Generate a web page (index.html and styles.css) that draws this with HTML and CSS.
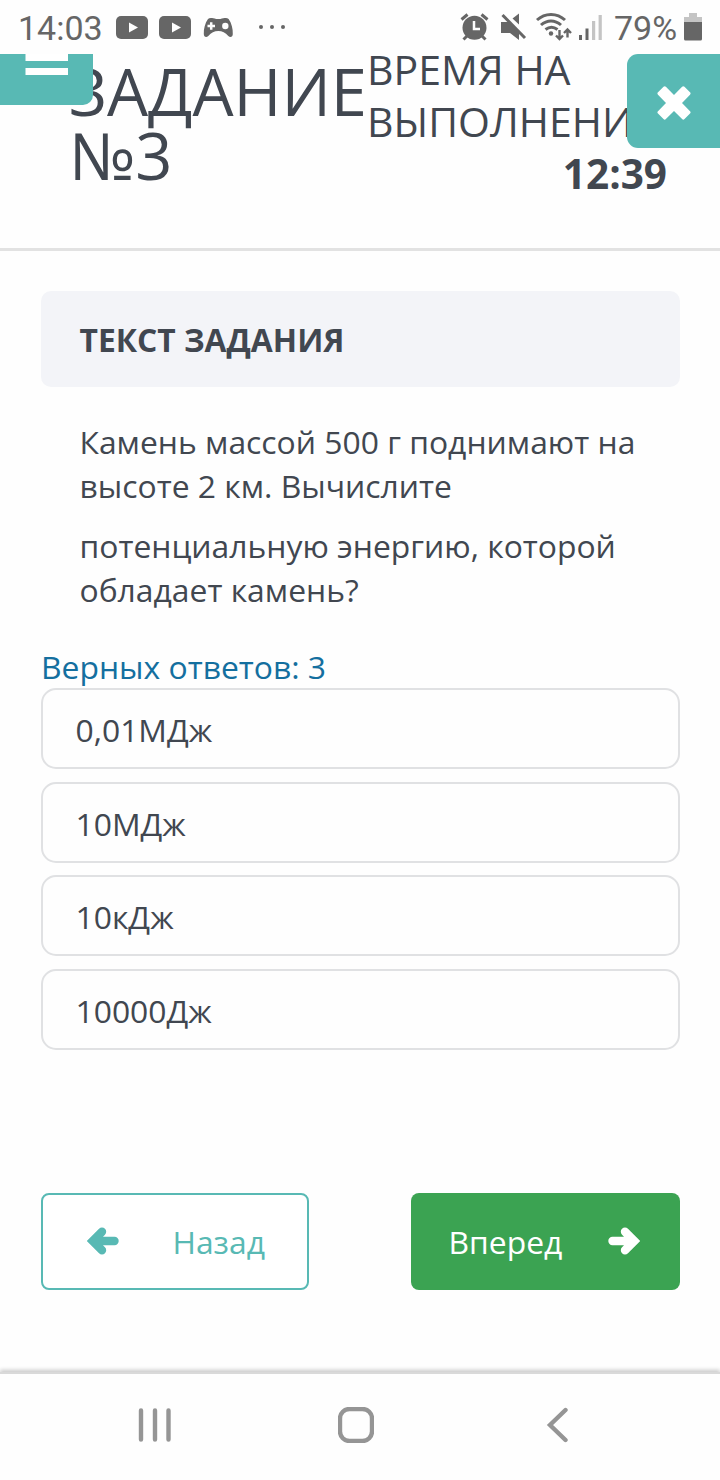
FILE: index.html
```html
<!DOCTYPE html>
<html lang="ru">
<head>
  <meta charset="UTF-8">
  <meta name="viewport" content="width=720, initial-scale=1.0">
  <title>Задание №3</title>
  <link rel="stylesheet" href="styles.css">
</head>
<body>
  <div class="status-bar">
    <span class="clock">14:03</span>
    <svg class="status-left" viewBox="110 0 180 54" width="180" height="54">
      <rect x="116" y="16" width="32" height="23" rx="5"/>
      <path class="cut" d="M129 22.500v10l9-5z"/>
      <rect x="159" y="16" width="32" height="23" rx="5"/>
      <path class="cut" d="M172 22.500v10l9-5z"/>
      <path d="M208 19q1.500-1.500 4-1c2 .3 3 1 6.300 1s4.300-.7 6.300-1q2.500-.5 4 1c3 4 4.400 10 4.200 15 0 3-2.500 4-4.500 2-3-3.500-6-5-10-5s-7 1.500-10 5c-2 2-4.500 1-4.500-2-.2-5 1.200-11 4.200-15z"/>
      <path class="cut-line" d="M207.500 26h7.500M211.200 22.200v7.500"/>
      <circle class="cut" cx="225.300" cy="26" r="3.200"/>
      <circle cx="261" cy="27" r="2"/>
      <circle cx="272" cy="27" r="2"/>
      <circle cx="283" cy="27" r="2"/>
    </svg>
    <svg class="status-right" viewBox="455 0 150 54" width="150" height="54">
      <circle cx="474.500" cy="27.800" r="12"/>
      <path class="line" d="M461.500 19.500l6-5M487.500 19.500l-6-5M467.500 35.500l-4 4M481.500 35.500l4 4"/>
      <path class="cut-line" d="M474 21v8h6"/>
      <path d="M501 22h8l10 10v8l-9-7h-9zM519 13.500v11l-6.500-6z"/>
      <path class="line" d="M502.500 15l22.500 23"/>
      <path class="line" d="M537 20c8-7.500 20-7.500 28 0M541 25c6-5.500 14-5.500 20 0M545.500 29.500c4-3 8-3 12 0"/>
      <circle cx="551" cy="33.500" r="2.200"/>
      <path class="thin" d="M559.500 30v8.500M556 35.500l3.500 3.500 3.500-3.500M567.500 37.500v-8M564 33l3.500-3.500 3.500 3.500"/>
      <path d="M579 35h3v5h-3zM585.500 28.500h3v11.500h-3z"/>
      <path class="faint" d="M592 21h3.200v19H592zM598.600 15h3.200v25h-3.200z"/>
    </svg>
    <span class="battery">79%</span>
    <svg class="battery-icon" viewBox="0 0 18 28" width="18" height="28">
      <path class="faint" d="M5 0h8v4h5v6H0V4h5z"/>
      <path d="M0 9h18v17q0 1.500-1.500 1.500h-15Q0 27.500 0 26z"/>
    </svg>
  </div>

  <header class="header">
    <h1 class="title">ЗАДАНИЕ №3</h1>
    <div class="timer">
      <div>ВРЕМЯ НА</div>
      <div>ВЫПОЛНЕНИЕ</div>
      <div class="timer-value">12:39</div>
    </div>
    <button class="menu-btn" aria-label="Меню">
      <svg viewBox="0 0 93 51" width="93" height="51">
        <path d="M25.500 0h42.500v7H25.500zM25.500 14h42.500v7H25.500z"/>
      </svg>
    </button>
    <button class="close-btn" aria-label="Закрыть">
      <svg viewBox="0 0 34 34" width="34" height="34">
        <path d="M6.500 .8q1.200-1.200 2.400 0L17 9l8.100-8.200q1.200-1.200 2.400 0l5.500 5.500q1.200 1.200 0 2.400L25 17l8 8.200q1.200 1.200 0 2.400l-5.500 5.500q-1.200 1.200-2.400 0L17 25l-8.100 8.100q-1.200 1.200-2.400 0L1 27.600q-1.200-1.200 0-2.400L9 17 1 8.700q-1.200-1.200 0-2.400z"/>
      </svg>
    </button>
  </header>

  <main class="content">
    <h2 class="section-title">ТЕКСТ ЗАДАНИЯ</h2>
    <div class="question">
      <p>Камень массой 500 г поднимают на высоте 2 км. Вычислите</p>
      <p>потенциальную энергию, которой обладает камень?</p>
    </div>

    <div class="correct-count">Верных ответов: 3</div>
    <ul class="answers">
      <li class="answer">0,01МДж</li>
      <li class="answer">10МДж</li>
      <li class="answer">10кДж</li>
      <li class="answer">10000Дж</li>
    </ul>

    <div class="buttons">
      <button class="btn btn-back">
        <svg viewBox="0 0 32 28" width="32" height="28">
          <path d="M15 4.800L5.800 14l9.200 9.200M7 14h20.500"/>
        </svg>
        <span>Назад</span>
      </button>
      <button class="btn btn-next">
        <span>Вперед</span>
        <svg viewBox="0 0 32 28" width="32" height="28">
          <path d="M17 4.800l9.200 9.200-9.200 9.200M25 14H4.500"/>
        </svg>
      </button>
    </div>
  </main>

  <nav class="nav-bar">
    <svg viewBox="0 0 34 36" width="34" height="36">
      <path d="M3 3.500v29M17 3.500v29M30.500 3.500v29"/>
    </svg>
    <svg class="home" viewBox="0 0 36 36" width="36" height="36">
      <rect x="2" y="2" width="32" height="32" rx="9.500"/>
    </svg>
    <svg viewBox="0 0 22 36" width="22" height="36">
      <path d="M19.500 3L4 18l15.500 15"/>
    </svg>
  </nav>
</body>
</html>
```
FILE: styles.css
```css
* {
  margin: 0;
  padding: 0;
  box-sizing: border-box;
}

body {
  width: 720px;
  height: 1480px;
  display: flex;
  flex-direction: column;
  overflow: hidden;
  background: #fefefe;
  color: #414750;
  font-family: "Open Sans", "Noto Sans", sans-serif;
  font-size: 31.85px;
  line-height: 44px;
}

svg {
  display: block;
  flex: none;
}

.status-bar {
  position: relative;
  z-index: 2;
  height: 54px;
  display: flex;
  align-items: center;
  padding: 0 18px;
  background: #fefefe;
  color: #666;
  font-family: Roboto, sans-serif;
  font-size: 34px;
  line-height: 52px;
}

.status-bar svg {
  fill: #666;
}

.clock {
  width: 92px;
  padding-top: 2px;
}

.status-right {
  margin-left: 165px;
}

.battery {
  width: 79px;
  padding: 2px 0 0 9px;
  white-space: nowrap;
}

.battery-icon {
  margin-left: auto;
}

.status-bar .cut {
  fill: #fefefe;
}

.status-bar .cut-line {
  fill: none;
  stroke: #fefefe;
  stroke-width: 2.5;
}

.status-bar .line {
  fill: none;
  stroke: #666;
  stroke-width: 3;
}

.status-bar .thin {
  fill: none;
  stroke: #666;
  stroke-width: 2.4;
}

.status-bar .faint {
  fill: #c4c4c4;
}

.header {
  position: relative;
  height: 197px;
  display: flex;
  align-items: flex-start;
  padding: 5px 53px 0 69px;
  border-bottom: 3px solid #e2e2e2;
}

.title {
  width: 298px;
  flex: none;
  font-size: 65px;
  font-weight: 400;
  line-height: 64px;
}

.timer {
  width: 300px;
  margin-top: -16px;
  flex: none;
  font-size: 41px;
  line-height: 52px;
}

.timer-value {
  padding-top: 1px;
  font-size: 40.5px;
  font-weight: 700;
  text-align: right;
}

.menu-btn,
.close-btn {
  position: absolute;
  top: 0;
  border: none;
  background: #58b9b4;
  fill: #fff;
}

.menu-btn {
  left: 0;
  width: 93px;
  height: 51px;
  border-radius: 0 0 10px 0;
}

.close-btn {
  right: 0;
  width: 93px;
  height: 94px;
  display: flex;
  justify-content: center;
  align-items: center;
  padding-top: 3px;
  border-radius: 11px 0 0 11px;
}

.content {
  flex: 1;
  padding: 40px 40px 0 41px;
}

.section-title {
  height: 96px;
  padding: 0 38.5px;
  border-radius: 10px;
  background: #f3f4f8;
  font-size: 31.8px;
  font-weight: 700;
  line-height: 98px;
}

.question {
  padding: 33px 38.5px 0;
}

.question p {
  margin-bottom: 16px;
}

.correct-count {
  height: 43px;
  margin-top: 33px;
  color: #146f9f;
}

.answers {
  display: flex;
  flex-direction: column;
  gap: 12.7px;
  list-style: none;
}

.answer {
  height: 81px;
  padding: 0 32.5px;
  border: 2px solid #e0e1e3;
  border-radius: 15px;
  line-height: 79px;
}

.buttons {
  display: flex;
  justify-content: space-between;
  margin-top: 143px;
}

.btn {
  height: 97px;
  display: flex;
  justify-content: space-between;
  align-items: center;
  border-radius: 8px;
  font: inherit;
}

.btn svg {
  margin-bottom: 2px;
  fill: none;
  stroke: currentColor;
  stroke-width: 8.4;
  stroke-linecap: round;
  stroke-linejoin: miter;
}

.btn-back {
  width: 268px;
  padding: 0 42px 0 44px;
  border: 2px solid #58b9b4;
  background: #fff;
  color: #58b9b4;
}

.btn-next {
  width: 269px;
  padding: 0 40px 0 37.5px;
  border: none;
  background: #3ba352;
  color: #fff;
}

.nav-bar {
  position: relative;
  height: 106px;
  display: flex;
  justify-content: space-between;
  align-items: center;
  padding: 0 152px 4px 138px;
  background: #fefefe;
  box-shadow: 0 -2px 0 #d9d9d9, 0 -4px 4px #c8c8c8;
}

.nav-bar svg {
  fill: none;
  stroke: #959595;
  stroke-width: 4.4;
  stroke-linecap: round;
}

.nav-bar .home {
  margin-right: 6px;
}
```
